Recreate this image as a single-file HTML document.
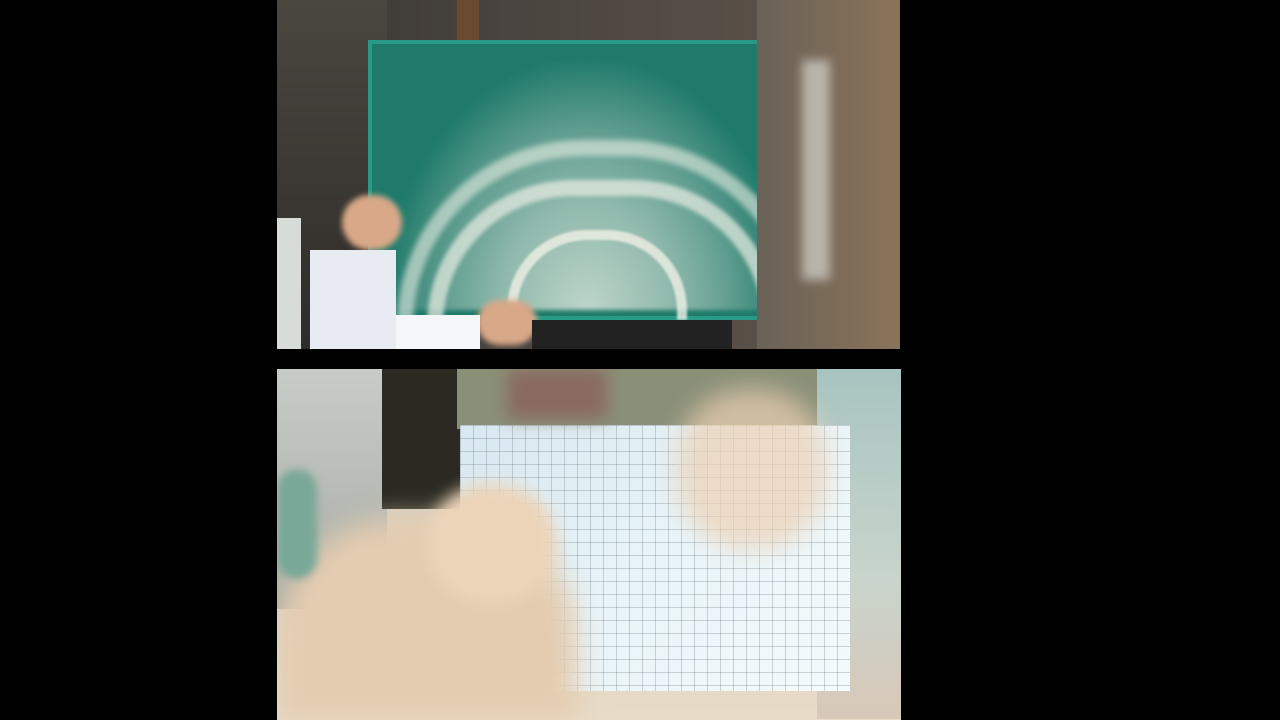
<!DOCTYPE html>
<html><head><meta charset="utf-8"><style>
body{margin:0;width:1280px;height:720px;background:#000;overflow:hidden;position:relative;font-family:"Liberation Sans",sans-serif}
.a{position:absolute}
</style></head><body>
<div class="a" style="left:277px;top:0;width:623px;height:349px;background:linear-gradient(90deg,#3a3632 0%,#4a4540 40%,#5a5048 80%,#6a5a48 100%);overflow:hidden">
  <div class="a" style="left:0;top:0;width:110px;height:349px;background:linear-gradient(180deg,#4a4640,#2e2c28)"></div>
  <div class="a" style="left:180px;top:0;width:22px;height:50px;background:#6a4a30"></div>
  <div class="a" style="left:91px;top:40px;width:397px;height:280px;background:#1f7a6a;border:4px solid #2a9a88;box-sizing:border-box"></div>
  <div class="a" style="left:110px;top:60px;width:400px;height:250px;background:radial-gradient(ellipse at 50% 100%,rgba(230,235,225,.8) 0%,rgba(220,228,218,.6) 30%,rgba(200,215,205,.4) 50%,rgba(40,120,105,0) 72%);filter:blur(2px)"></div>
  <div class="a" style="left:120px;top:140px;width:380px;height:170px;border-radius:190px 190px 0 0;border:16px solid rgba(235,238,228,.6);border-bottom:none;filter:blur(3px)"></div>
  <div class="a" style="left:150px;top:180px;width:320px;height:130px;border-radius:160px 160px 0 0;border:16px solid rgba(235,238,228,.7);border-bottom:none;filter:blur(2px)"></div>
  <div class="a" style="left:230px;top:230px;width:160px;height:80px;border-radius:80px 80px 0 0;border:10px solid rgba(240,240,230,.8);border-bottom:none;filter:blur(1px)"></div>
  <div class="a" style="left:480px;top:0;width:143px;height:349px;background:linear-gradient(90deg,#6a6258,#7a6a58 50%,#8a7458);"></div>
  <div class="a" style="left:525px;top:60px;width:28px;height:220px;background:rgba(230,230,225,.6);filter:blur(5px)"></div>
  <div class="a" style="left:65px;top:195px;width:60px;height:55px;background:#d8a888;border-radius:30px;filter:blur(3px)"></div>
  <div class="a" style="left:200px;top:300px;width:60px;height:45px;background:#d8a888;border-radius:25px;filter:blur(3px)"></div>
  <div class="a" style="left:0;top:218px;width:24px;height:131px;background:#d8dcd8"></div>
  <div class="a" style="left:33px;top:250px;width:86px;height:99px;background:#e8ecf2"></div>
  <div class="a" style="left:119px;top:315px;width:84px;height:34px;background:#f4f6f8"></div>
  <div class="a" style="left:255px;top:320px;width:200px;height:29px;background:#222"></div>
</div>
<div class="a" style="left:277px;top:369px;width:624px;height:351px;background:linear-gradient(180deg,#b0b8a8 0%,#d8d0c0 40%,#e8dcc8 100%);overflow:hidden">
  <div class="a" style="left:0;top:0;width:110px;height:240px;background:linear-gradient(180deg,#c8ccc8,#a8aca4)"></div>
  <div class="a" style="left:105px;top:0;width:80px;height:140px;background:#2a2a22"></div>
  <div class="a" style="left:180px;top:0;width:400px;height:60px;background:#8a9078"></div>
  <div class="a" style="left:540px;top:0;width:84px;height:350px;background:linear-gradient(180deg,#a8c4c0,#c8d4cc 60%,#d8c8b8)"></div>
  <div class="a" style="left:183px;top:56px;width:390px;height:266px;background:linear-gradient(135deg,#d8e8f0,#e8f4f8 50%,#f4fafc);"></div>
  <div class="a" style="left:183px;top:56px;width:390px;height:266px;background-image:linear-gradient(rgba(60,70,80,.22) 1px,transparent 1px),linear-gradient(90deg,rgba(60,70,80,.22) 1px,transparent 1px);background-size:13px 13px"></div>
  <div class="a" style="left:0;top:150px;width:300px;height:201px;background:#e4ccb0;border-radius:120px 120px 0 0;filter:blur(14px)"></div>
  <div class="a" style="left:150px;top:115px;width:130px;height:120px;background:#ecd4b8;border-radius:60px;filter:blur(8px)"></div>
  <div class="a" style="left:400px;top:20px;width:150px;height:160px;background:rgba(236,208,180,.7);border-radius:70px;filter:blur(12px)"></div>
  <div class="a" style="left:230px;top:0;width:100px;height:50px;background:#8a6a60;filter:blur(8px)"></div>
  <div class="a" style="left:0;top:100px;width:40px;height:110px;background:#7aa898;border-radius:20px;filter:blur(4px)"></div>
</div>
</body></html>
